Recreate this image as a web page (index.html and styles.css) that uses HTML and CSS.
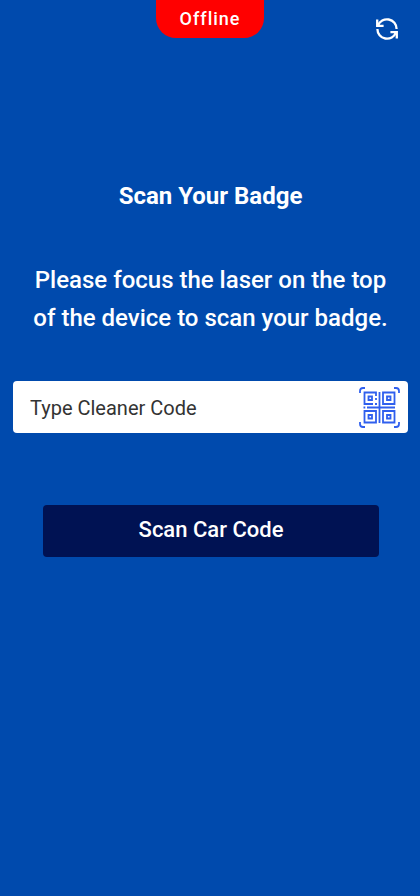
FILE: index.html
```html
<!DOCTYPE html>
<html lang="en">
<head>
<meta charset="utf-8">
<meta name="viewport" content="width=device-width, initial-scale=1">
<title>Scan Your Badge</title>
<link rel="stylesheet" href="styles.css">
</head>
<body>
<header class="topbar">
  <span class="status" role="status">Offline</span>
  <button class="refresh" type="button" aria-label="Refresh">
    <svg viewBox="0 0 24 24" width="24" height="24" fill="none" stroke="currentColor" stroke-width="2.3">
      <path d="M3 8.6A9.6 9.6 0 0 1 21.6 12M21 15.4A9.6 9.6 0 0 1 2.4 12"/>
      <path d="M2.2 2.6V8.8H8.6M21.8 21.4V15.2H15.4"/>
    </svg>
  </button>
</header>
<main class="content">
  <h1 class="title">Scan Your Badge</h1>
  <p class="hint">Please focus the laser on the top of the device to scan your badge.</p>
  <form class="form">
    <div class="field">
      <input class="code" type="text" placeholder="Type Cleaner Code" aria-label="Type Cleaner Code">
      <button class="scan" type="button" aria-label="Scan QR code">
        <svg viewBox="0 0 41 41" width="41" height="41" fill="none" stroke="currentColor" stroke-width="1.8">
          <path d="M1 6V4Q1 1 4 1H6M35 1H37Q40 1 40 4V6M40 35V37Q40 40 37 40H35M6 40H4Q1 40 1 37V35"/>
          <path d="M17 9V5.5H5.5V17H14M17 11V13M16 17H18M24 5.5H35.5V17H24ZM5.5 24H17V35.5H5.5ZM24 24H35.5V35.5H24Z"/>
          <path d="M9.5 9.5H13V13H9.5ZM28 9.5H31.5V13H28ZM9.5 28H13V31.5H9.5ZM28 28H31.5V31.5H28Z"/>
          <path d="M20.5 5V36M8 20.5H36M4.5 20.5H6.3"/>
        </svg>
      </button>
    </div>
    <button class="submit" type="submit">Scan Car Code</button>
  </form>
</main>
</body>
</html>
```
FILE: styles.css
```css
* {
  box-sizing: border-box;
}

body {
  margin: 0;
  min-height: 100vh;
  background: #004aad;
  color: #fff;
  font-family: Roboto, "Liberation Sans", sans-serif;
}

button {
  padding: 0;
  border: 0;
  background: none;
  font: inherit;
}

svg {
  display: block;
}

.topbar {
  display: grid;
  grid-template-columns: 1fr auto 1fr;
  align-items: start;
}

.status {
  grid-column: 2;
  padding: 0 24px;
  border-radius: 0 0 20px 20px;
  background: #f00;
  font-size: 18px;
  font-weight: 500;
  line-height: 38px;
  letter-spacing: 1px;
}

.refresh {
  justify-self: end;
  margin: 17px 21px 0 0;
  color: #fff;
}

.content {
  padding: 0 12px 0 13px;
}

.title {
  margin: 136px 0 0;
  font-size: 24px;
  font-weight: 700;
  line-height: 38px;
  text-align: center;
}

.hint {
  margin: 46px 16px 0;
  font-size: 24px;
  font-weight: 500;
  line-height: 38px;
  text-align: center;
}

.form {
  margin-top: 44px;
}

.field {
  display: flex;
  align-items: center;
  height: 52px;
  padding: 0 8px 0 17px;
  border-radius: 4px;
  background: #fff;
}

.code {
  flex: 1;
  min-width: 0;
  padding: 2px 0 0;
  border: 0;
  outline: 0;
  background: none;
  color: #333;
  font: 400 20px/28px Roboto, "Liberation Sans", sans-serif;
}

.code::placeholder {
  color: #333;
  opacity: 1;
}

.scan {
  color: #2f5fee;
}

.submit {
  display: block;
  width: calc(100% - 59px);
  height: 52px;
  margin: 72px 0 0 30px;
  padding-bottom: 4px;
  border-radius: 4px;
  background: #001253;
  color: #fff;
  font-size: 22px;
  font-weight: 500;
}
```
